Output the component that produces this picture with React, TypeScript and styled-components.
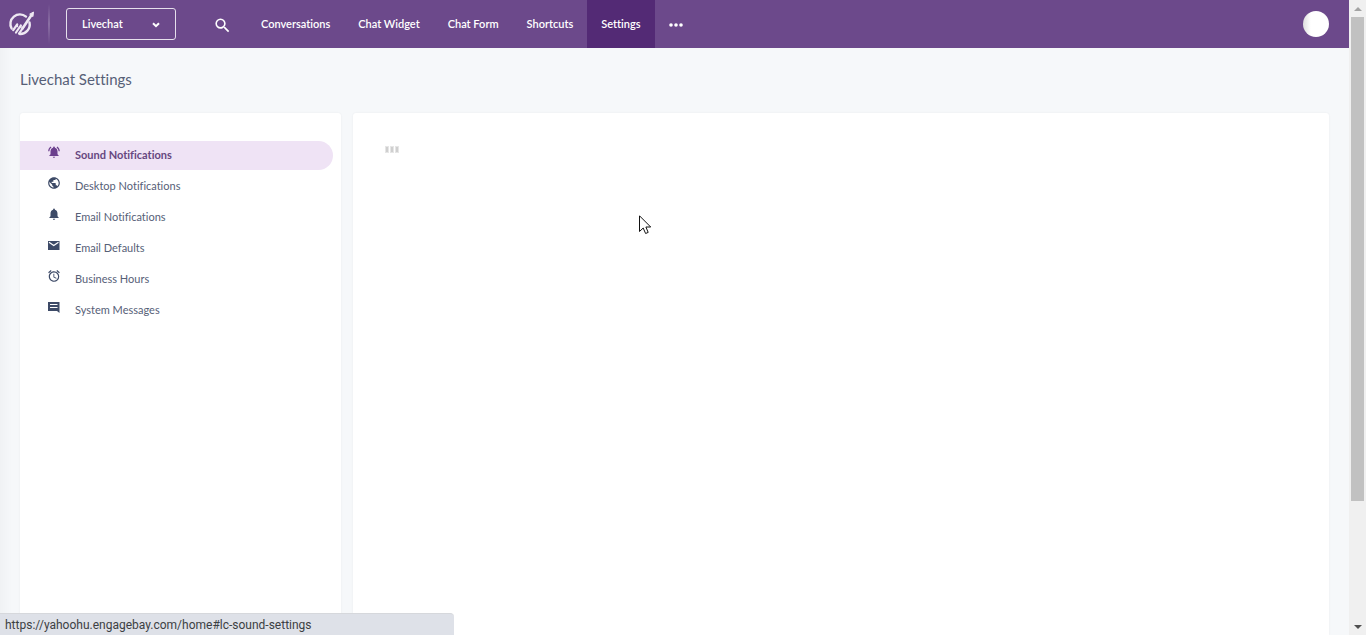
import React from "react";
import styled, { createGlobalStyle, css } from "styled-components";
import {
  MdNotificationsActive,
  MdPublic,
  MdNotifications,
  MdAlarm,
  MdSearch,
} from "react-icons/md";

const GlobalStyle = createGlobalStyle`
  *, *::before, *::after { box-sizing: border-box; }
  body {
    margin: 0;
    font-family: Lato, "Open Sans", sans-serif;
    font-variant-ligatures: none;
    color: #566077;
    overflow: hidden;
  }
  a { color: inherit; text-decoration: none; }
  button { font: inherit; color: inherit; }
`;

const Shell = styled.div`
  display: grid;
  grid-template-columns: minmax(0, 1fr) 17px;
  height: 100vh;
`;

const Page = styled.div`
  display: flex;
  flex-direction: column;
  min-height: 0;
  background: #f6f8fa;
`;

const TopBar = styled.header`
  display: flex;
  align-items: center;
  flex: none;
  height: 48px;
  padding-right: 20px;
  background: #6c498b;
  color: #fff;
`;

const LogoLink = styled.a`
  display: flex;
  align-items: center;
  width: 50px;
  height: 48px;
  padding: 0 0 2px 8px;
  background: linear-gradient(to bottom, transparent, #8b70a4 50%, transparent) right / 2px 40px no-repeat;
`;

const ProductButton = styled.button`
  display: flex;
  align-items: center;
  justify-content: space-between;
  width: 110px;
  height: 32px;
  margin-left: 16px;
  padding: 0 15px 2px;
  border: 1px solid #e6dfec;
  border-radius: 3px;
  background: transparent;
  font-size: 11px;
  font-weight: 600;
  svg { margin-top: 3px; }
`;

const SearchButton = styled.button`
  display: flex;
  margin: 2px 15px 0 37px;
  padding: 0;
  border: 0;
  background: transparent;
`;

const Nav = styled.nav`
  display: flex;
  height: 48px;
`;

const NavLink = styled.a<{ $active?: boolean }>`
  display: flex;
  align-items: center;
  padding: 0 14px 2px;
  font-size: 11px;
  font-weight: 600;
  background: ${(p) => (p.$active ? "#532a75" : "transparent")};
  svg { margin-top: 3px; }
`;

const Avatar = styled.button`
  width: 26px;
  height: 26px;
  margin-left: auto;
  padding: 0;
  border: 0;
  border-radius: 50%;
  background: linear-gradient(to right, #dedede, #fff 30%);
`;

const Content = styled.main`
  display: flex;
  flex-direction: column;
  flex: 1;
  min-height: 0;
  padding: 20px 20px 0;
  background: linear-gradient(to right, #f0f2f4, #f6f8fa 12px);
`;

const Title = styled.h1`
  margin: 0 0 23px;
  font-size: 15px;
  line-height: 22px;
  font-weight: 400;
`;

const Columns = styled.div`
  display: grid;
  grid-template-columns: minmax(200px, 321px) minmax(0, 1fr);
  gap: 12px;
  flex: 1;
`;

const Panel = styled.section`
  background: #fff;
  border-radius: 3px 3px 0 0;
  box-shadow: 0 0 2px rgba(60, 70, 90, 0.08);
`;

const MenuPanel = styled(Panel)`
  padding: 28px 8px 0 0;
`;

const Menu = styled.ul`
  display: flex;
  flex-direction: column;
  gap: 2px;
  margin: 0;
  padding: 0;
  list-style: none;
`;

const MenuLink = styled.a<{ $active?: boolean }>`
  display: flex;
  gap: 14px;
  height: 29px;
  padding: 4px 0 0 27px;
  border-radius: 0 15px 15px 0;
  font-size: 11px;
  line-height: 20px;
  svg { flex: none; color: #3d4a67; }
  ${(p) =>
    p.$active &&
    css`
      background: #efe3f5;
      color: #66477f;
      font-weight: 700;
      svg { color: #6b3f8d; }
    `}
`;

const LoadingPanel = styled(Panel)`
  padding: 33px 32px;
`;

const Loader = styled.div`
  display: flex;
  gap: 1px;
`;

const LoaderBar = styled.span`
  width: 4px;
  height: 7px;
  border: 1px solid #e6e6e6;
  background: #cfcfcf;
`;

const ScrollTrack = styled.div`
  display: flex;
  flex-direction: column;
  align-items: center;
  background: #f0f0f0;
`;

const ScrollThumb = styled.div`
  width: 13px;
  height: 484px;
  flex: 0 1 auto;
  background: #c1c1c1;
`;

const ScrollArrow = styled.span<{ $end?: boolean }>`
  display: flex;
  align-items: center;
  justify-content: center;
  width: 17px;
  height: 17px;
  flex: none;
  margin-top: ${(p) => (p.$end ? "auto" : "0")};
`;

const StatusBar = styled.div`
  position: fixed;
  left: 0;
  bottom: 0;
  width: 454px;
  height: 22px;
  padding-left: 5px;
  border-top: 1px solid #d6d8dc;
  border-radius: 0 4px 0 0;
  background: #dee1e8;
  color: #3c4043;
  font-family: Roboto, sans-serif;
  font-size: 12px;
  line-height: 22px;
`;

const Pointer = styled.svg`
  position: fixed;
  left: 639px;
  top: 215px;
`;

function EnvelopeIcon({ size }: { size: number }) {
  return (
    <svg width={size} height={size} viewBox="0 0 14 14">
      <path d="M1 3H12.5V12H1Z" fill="currentColor" />
      <path d="M2 4.3L6.75 7.5L11.5 4.3" fill="none" stroke="#fff" strokeWidth="1.2" />
    </svg>
  );
}

function CommentIcon({ size }: { size: number }) {
  return (
    <svg width={size} height={size} viewBox="0 0 14 14">
      <path d="M1 2H12.5V13L10 11H1Z" fill="currentColor" />
      <path d="M3 4.5H10.5M3 7.5H10.5" stroke="#fff" strokeWidth="1" />
    </svg>
  );
}

const navItems = ["Conversations", "Chat Widget", "Chat Form", "Shortcuts", "Settings"];

const menuItems = [
  { label: "Sound Notifications", Icon: MdNotificationsActive },
  { label: "Desktop Notifications", Icon: MdPublic },
  { label: "Email Notifications", Icon: MdNotifications },
  { label: "Email Defaults", Icon: EnvelopeIcon },
  { label: "Business Hours", Icon: MdAlarm },
  { label: "System Messages", Icon: CommentIcon },
];

function Logo() {
  return (
    <svg width="28" height="28" viewBox="0 0 28 28" fill="none" stroke="#eee8f2" strokeLinecap="round">
      <path d="M18 7.6A9.5 9.5 0 0 0 3.6 19.5" strokeWidth="2.4" />
      <path d="M21.5 13.5A9.5 9.5 0 0 1 12 25" strokeWidth="2.4" />
      <path d="M5.2 21.2L9.2 15.5M8 23.5L12.8 16.5M11 24.6L15.2 18.5" strokeWidth="2.2" />
      <path d="M9.2 15.5L9.5 17.5M12.8 16.5L13 18.8" strokeWidth="1.4" />
      <path d="M14.5 19.5L23.5 6" strokeWidth="2.6" />
      <path d="M22 5L25.5 3L25 7.2Z" fill="#eee8f2" strokeWidth="1" />
    </svg>
  );
}

export default function App() {
  return (
    <>
      <GlobalStyle />
      <Shell>
        <Page>
          <TopBar>
            <LogoLink href="#home" aria-label="Home"><Logo /></LogoLink>
            <ProductButton type="button" aria-haspopup="menu">
              Livechat
              <svg width="8" height="6" viewBox="0 0 8 6" fill="none" stroke="#fff" strokeWidth="2">
                <path d="M1 1.2L4 4.2L7 1.2" />
              </svg>
            </ProductButton>
            <SearchButton type="button" aria-label="Search"><MdSearch size={19} /></SearchButton>
            <Nav>
              {navItems.map((item) => (
                <NavLink key={item} href="#nav" $active={item === "Settings"}>{item}</NavLink>
              ))}
              <NavLink href="#more" aria-label="More">
                <svg width="14" height="4" viewBox="0 0 14 4" fill="#fff">
                  <circle cx="2" cy="2" r="1.8" />
                  <circle cx="7" cy="2" r="1.8" />
                  <circle cx="12" cy="2" r="1.8" />
                </svg>
              </NavLink>
            </Nav>
            <Avatar type="button" aria-label="Account" />
          </TopBar>
          <Content>
            <Title>Livechat Settings</Title>
            <Columns>
              <MenuPanel>
                <Menu>
                  {menuItems.map(({ label, Icon }, i) => (
                    <li key={label}>
                      <MenuLink href="#lc-sound-settings" $active={i === 0}>
                        <Icon size={14} />
                        {label}
                      </MenuLink>
                    </li>
                  ))}
                </Menu>
              </MenuPanel>
              <LoadingPanel>
                <Loader role="status" aria-label="Loading">
                  <LoaderBar /><LoaderBar /><LoaderBar />
                </Loader>
              </LoadingPanel>
            </Columns>
          </Content>
        </Page>
        <ScrollTrack aria-hidden="true">
          <ScrollArrow>
            <svg width="8" height="4" viewBox="0 0 8 4"><path d="M0 4L4 0L8 4Z" fill="#a3a3a3" /></svg>
          </ScrollArrow>
          <ScrollThumb />
          <ScrollArrow $end>
            <svg width="8" height="4" viewBox="0 0 8 4"><path d="M0 0L4 4L8 0Z" fill="#505050" /></svg>
          </ScrollArrow>
        </ScrollTrack>
      </Shell>
      <StatusBar>https://yahoohu.engagebay.com/home#lc-sound-settings</StatusBar>
      <Pointer width="13" height="20" viewBox="0 0 13 20" aria-hidden="true">
        <path d="M.5 .8V16.5L4.2 13L6.6 18.5L9.2 17.4L6.9 12H11.7Z" fill="#fff" stroke="#111" />
      </Pointer>
    </>
  );
}
